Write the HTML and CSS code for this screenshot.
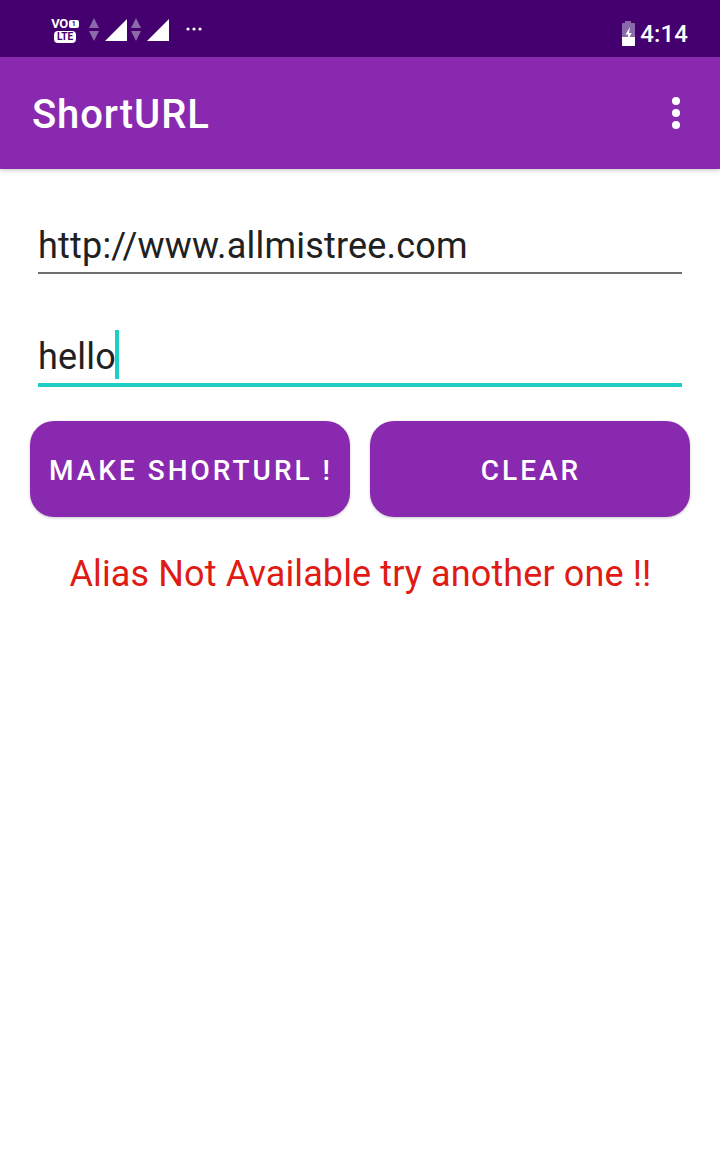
FILE: index.html
```html
<!DOCTYPE html>
<html lang="en">
<head>
<meta charset="utf-8">
<title>ShortURL</title>
<link rel="stylesheet" href="styles.css">
</head>
<body>
<div class="status">
  <div class="status-left">
    <div class="volte">
      <div class="vo-row"><span class="vo">VO</span><span class="sim">1</span></div>
      <span class="lte">LTE</span>
    </div>
    <svg class="updown" width="12" height="26" viewBox="0 0 12 26"><path d="M6 1l5 10H1z M1 14h10L6 24z" fill="#8a6aa8"/></svg>
    <svg class="signal" width="23" height="23" viewBox="0 0 23 23"><path d="M0 22L22 0v22z" fill="#fff"/></svg>
    <svg class="updown" width="12" height="26" viewBox="0 0 12 26"><path d="M6 1l5 10H1z M1 14h10L6 24z" fill="#8a6aa8"/></svg>
    <svg class="signal" width="23" height="23" viewBox="0 0 23 23"><path d="M0 22L22 0v22z" fill="#fff"/></svg>
    <svg class="more" width="16" height="4" viewBox="0 0 16 4"><circle cx="2" cy="2" r="1.6" fill="#fff"/><circle cx="8" cy="2" r="1.6" fill="#fff"/><circle cx="14" cy="2" r="1.6" fill="#fff"/></svg>
  </div>
  <div class="status-right">
    <svg width="15" height="25" viewBox="0 0 15 25"><path d="M4 0h6v2h3a1 1 0 0 1 1 1v21a1 1 0 0 1-1 1H2a1 1 0 0 1-1-1V3a1 1 0 0 1 1-1h2z" fill="#8a6aa8"/><path d="M1 16h13v8a1 1 0 0 1-1 1H2a1 1 0 0 1-1-1z" fill="#fff"/><path d="M9 6L4.500 13.500h2.800L6 20l4.800-8H8z" fill="#fff"/></svg>
    <span class="clock">4:14</span>
  </div>
</div>
<header class="appbar">
  <h1 class="title">ShortURL</h1>
  <svg class="menu" width="10" height="34" viewBox="0 0 10 34"><circle cx="5" cy="5" r="4" fill="#fff"/><circle cx="5" cy="17" r="4" fill="#fff"/><circle cx="5" cy="29" r="4" fill="#fff"/></svg>
</header>
<main class="content">
  <div class="field field-url"><span class="field-text">http://www.allmistree.com</span></div>
  <div class="field field-alias"><span class="field-text">hello</span><span class="caret"></span></div>
  <div class="buttons">
    <div class="btn">MAKE SHORTURL !</div>
    <div class="btn">CLEAR</div>
  </div>
  <p class="message">Alias Not Available try another one !!</p>
</main>
</body>
</html>
```
FILE: styles.css
```css
* { box-sizing: border-box; }
html, body { margin: 0; padding: 0; }
body { width: 720px; height: 1162px; background: #fff; font-family: Roboto, "Liberation Sans", sans-serif; overflow: hidden; }
.status { height: 57px; background: #44006e; display: flex; justify-content: space-between; align-items: center; padding: 0 32px 0 51px; color: #fff; }
.status-left { display: flex; align-items: center; padding-top: 3px; }
.volte { width: 28px; display: flex; flex-direction: column; align-items: center; gap: 1px; margin-right: 9px; }
.vo-row { display: flex; align-items: center; gap: 1px; height: 12px; }
.vo { font-size: 13px; font-weight: 700; letter-spacing: -0.5px; line-height: 12px; }
.sim { font-size: 7px; font-weight: 700; background: #fff; color: #44006e; border-radius: 2px; width: 10px; height: 8px; line-height: 8px; text-align: center; }
.lte { font-size: 10px; font-weight: 700; background: #fff; color: #44006e; border-radius: 4px; height: 12px; line-height: 12px; padding: 0 3px; }
.updown { margin-right: 5px; }
.signal { margin-right: 2px; }
.more { margin-left: 14px; margin-bottom: 3px; }
.status-right { display: flex; align-items: center; gap: 4px; padding-top: 10px; }
.clock { font-size: 24px; font-weight: 500; line-height: 28px; letter-spacing: 0.1px; }
.appbar { height: 112px; background: #8929b0; display: flex; align-items: center; justify-content: space-between; padding: 0 39px 0 32px; box-shadow: 0 2px 4px rgba(0,0,0,0.18); }
.title { margin: 0; padding-top: 4px; color: #fff; font-size: 40px; font-weight: 500; line-height: 48px; letter-spacing: 0.9px; }
.content { padding: 0 30px; }
.field { margin: 0 8px; display: flex; position: relative; }
.field-url { margin-top: 50px; height: 55px; border-bottom: 2px solid #6f6f6f; padding-top: 3px; }
.field-alias { margin-top: 55px; height: 58px; border-bottom: 4px solid #1fcfc6; padding-top: 4px; align-items: flex-start; }
.field-text { font-size: 36px; line-height: 48px; color: #212121; letter-spacing: 0.2px; }
.caret { width: 4px; height: 49px; background: #1fcfc6; margin-top: -3px; margin-left: -1px; }
.buttons { display: flex; gap: 20px; margin-top: 34px; }
.btn { flex: 1; height: 96px; border-radius: 24px; background: #8929b0; color: #fff; font-size: 28px; font-weight: 500; letter-spacing: 3px; padding: 2px 0 0 2px; display: flex; align-items: center; justify-content: center; box-shadow: 0 1px 3px rgba(0,0,0,0.22); }
.message { margin: 33px 0 0; padding-left: 1px; text-align: center; color: #e01b14; font-size: 36px; line-height: 48px; letter-spacing: 0.12px; }
```
